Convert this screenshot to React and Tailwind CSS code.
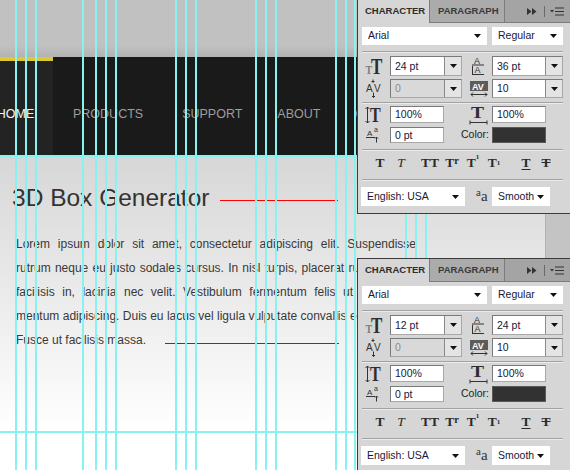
import React from "react";

const SERIF = "Liberation Serif, serif";
const SANS = "Liberation Sans, Arial, sans-serif";

const Tri = () => (
  <svg width="7" height="4" viewBox="0 0 7 4" className="shrink-0">
    <path d="M0 0H7L3.5 4Z" fill="#111" />
  </svg>
);

function Select({ cls, label }) {
  return (
    <div className={`${cls} h-full bg-white flex items-center justify-between pl-[6px] pr-[6px] text-[10.5px] text-[#181838]`}>
      <span>{label}</span>
      <Tri />
    </div>
  );
}

function Field({ cls, value, dd, disabled }) {
  return (
    <div
      className={`${cls} h-full flex border border-t-[#7a7a7a] border-l-[#7a7a7a] border-b-[#a8a8a8] border-r-[#a8a8a8] ${
        disabled ? "bg-[#d9d9d9] text-[#8c8c8c]" : "bg-white text-[#181838]"
      }`}
    >
      <div className="flex-1 flex items-center pl-[4px] text-[10.5px] leading-none">{value}</div>
      {dd && (
        <div className="w-[17px] border-l border-[#8a8a8a] bg-[#e4e4e4] flex items-center justify-center">
          <Tri />
        </div>
      )}
    </div>
  );
}

const Sep = ({ cls }) => (
  <div className={`${cls} ml-[4px] w-[201px] h-[2px] border-t border-t-[#a2a2a2] border-b border-b-[#ececec]`} />
);

const IconSize = () => (
  <svg width="19" height="18" viewBox="0 0 19 18">
    <text transform="translate(0.5 16.5) scale(1 1.3)" fontFamily={SERIF} fontWeight="700" fontSize="10" fill="#7d7d7d">T</text>
    <text transform="translate(6 16.5) scale(1 1.3)" fontFamily={SERIF} fontWeight="700" fontSize="17" fill="#2e2e2e">T</text>
  </svg>
);

const IconLeading = () => (
  <svg width="17" height="20" viewBox="0 0 17 20">
    <text x="4" y="7.5" fontFamily={SANS} fontSize="9" fill="#333">A</text>
    <line x1="2" y1="9" x2="14" y2="9" stroke="#333" />
    <line x1="2.5" y1="10" x2="2.5" y2="18" stroke="#333" />
    <text x="4.5" y="17" fontFamily={SANS} fontSize="9" fill="#333">A</text>
    <line x1="2" y1="18.5" x2="14" y2="18.5" stroke="#333" />
  </svg>
);

const IconKern = () => (
  <svg width="17" height="19" viewBox="0 0 17 19">
    <text x="0" y="13" fontFamily={SANS} fontSize="10" fill="#333">A</text>
    <text x="8" y="13" fontFamily={SANS} fontSize="10" fill="#333">V</text>
    <path d="M7 0.5V4M5.5 2.5H8.5" stroke="#333" fill="none" />
    <path d="M7.5 13.5V18.5M6 17L7.5 18.5L9 17" stroke="#333" fill="none" />
  </svg>
);

const IconTrack = () => (
  <svg width="18" height="18" viewBox="0 0 18 18">
    <rect x="0" y="1" width="18" height="10" fill="#5c5c5c" />
    <text x="2" y="9.5" fontFamily={SANS} fontWeight="700" fontSize="9" fill="#fff">AV</text>
    <path d="M1 14.5H17M3 12.5L1 14.5L3 16.5M15 12.5L17 14.5L15 16.5" stroke="#333" fill="none" />
  </svg>
);

const IconVScale = () => (
  <svg width="18" height="18" viewBox="0 0 18 18">
    <path d="M2.5 1V17M0.5 3L2.5 1L4.5 3M0.5 15L2.5 17L4.5 15" stroke="#333" fill="none" />
    <text transform="translate(5 16) scale(1 1.25)" fontFamily={SERIF} fontWeight="700" fontSize="16" fill="#2e2e2e">T</text>
  </svg>
);

const IconHScale = () => (
  <svg width="19" height="20" viewBox="0 0 19 20">
    <text transform="translate(2 13) scale(1.3 1.05)" fontFamily={SERIF} fontWeight="700" fontSize="15" fill="#2e2e2e">T</text>
    <path d="M1 17.5H18M1 15.5V19.5M18 15.5V19.5" stroke="#333" fill="none" />
  </svg>
);

const IconBaseline = () => (
  <svg width="16" height="16" viewBox="0 0 16 16">
    <text x="1" y="9" fontFamily={SANS} fontSize="8" fill="#333">A</text>
    <line x1="0" y1="10.5" x2="9" y2="10.5" stroke="#333" />
    <text x="8" y="5" fontFamily={SANS} fontSize="7" fill="#333">a</text>
    <path d="M10.5 15.5V10M9 11.5L10.5 10L12 11.5" stroke="#333" fill="none" />
  </svg>
);

function Panel({ top, size, lead }) {
  return (
    <div className={`absolute left-[357px] ${top} w-[220px] bg-[#d6d6d6] border border-[#3c3c3c] font-['Liberation_Sans',Arial,sans-serif]`}>
      <div className="h-[23px] flex">
        <div className="w-[72px] pl-[7px] flex items-center bg-[#d6d6d6] border-r border-[#7c7c7c] text-[9.5px] font-bold text-[#2c2c2c]">
          CHARACTER
        </div>
        <div className="w-[75px] pl-[8px] flex items-center bg-[#ababab] border-r border-b border-[#7c7c7c] text-[9.5px] font-bold text-[#3a3a3a]">
          PARAGRAPH
        </div>
        <div className="flex-1 flex items-center bg-[#a4a4a4] border-b border-[#7c7c7c] pl-[22px]">
          <svg width="10" height="7" viewBox="0 0 10 7">
            <path d="M0 0L4.5 3.5L0 7ZM5 0L9.5 3.5L5 7Z" fill="#333" />
          </svg>
          <div className="ml-[7px] w-px h-[11px] bg-[#6a6a6a]" />
          <svg width="15" height="9" viewBox="0 0 15 9" className="ml-[5px]">
            <path d="M0 3H4L2 5.5Z" fill="#333" />
            <path d="M5 1H14M5 4.5H14M5 8H14" stroke="#333" strokeWidth="1.2" />
          </svg>
        </div>
      </div>

      <div className="mt-[4px] h-[18px] flex pl-[4px] gap-[5px]">
        <Select cls="w-[125px]" label="Arial" />
        <Select cls="w-[71px]" label="Regular" />
      </div>

      <Sep cls="mt-[6px]" />

      <div className="mt-[3px] h-[20px] flex items-center pl-[4px]">
        <div className="w-[28px] h-full flex items-center pl-[3px]"><IconSize /></div>
        <Field cls="w-[72px]" value={size} dd />
        <div className="w-[30px] h-full flex items-center pl-[8px]"><IconLeading /></div>
        <Field cls="w-[71px]" value={lead} dd />
      </div>

      <div className="mt-[3px] h-[19px] flex items-center pl-[4px]">
        <div className="w-[28px] h-full flex items-center pl-[4px]"><IconKern /></div>
        <Field cls="w-[72px]" value="0" dd disabled />
        <div className="w-[30px] h-full flex items-center pl-[8px]"><IconTrack /></div>
        <Field cls="w-[71px]" value="10" dd />
      </div>

      <Sep cls="mt-[4px]" />

      <div className="mt-[2px] h-[17px] flex items-center pl-[4px]">
        <div className="w-[28px] h-full flex items-center pl-[3px]"><IconVScale /></div>
        <Field cls="w-[54px]" value="100%" />
        <div className="w-[18px]" />
        <div className="w-[30px] h-full flex items-center pl-[7px]"><IconHScale /></div>
        <Field cls="w-[54px]" value="100%" />
      </div>

      <div className="mt-[4px] h-[16px] flex items-center pl-[4px]">
        <div className="w-[28px] h-full flex items-center pl-[4px]"><IconBaseline /></div>
        <Field cls="w-[54px]" value="0 pt" />
        <div className="w-[17px]" />
        <div className="w-[31px] text-[10.5px] text-[#222]">Color:</div>
        <div className="w-[54px] h-full bg-[#323232] border border-[#5a5a5a]" />
      </div>

      <Sep cls="mt-[6px]" />

      <div className="mt-[3px] h-[18px] flex items-center font-['Liberation_Serif',serif] text-[13.5px] text-[#2b2b2b] leading-none">
        <div className="ml-[12px] w-[20px] flex justify-center font-bold">T</div>
        <div className="ml-[1px] w-[20px] flex justify-center italic">T</div>
        <div className="ml-[9px] w-[20px] flex justify-center font-bold">TT</div>
        <div className="ml-[2px] w-[20px] flex justify-center font-bold">
          T<span className="text-[10.5px]">r</span>
        </div>
        <div className="ml-[1px] w-[20px] flex justify-center font-bold">
          T<span className="text-[7px] relative top-[-2px]">1</span>
        </div>
        <div className="ml-[1px] w-[20px] flex justify-center font-bold">
          T<span className="text-[7px] relative top-[4px]">1</span>
        </div>
        <div className="ml-[12px] w-[20px] flex justify-center font-bold underline underline-offset-2">T</div>
        <div className="w-[20px] flex justify-center font-bold line-through">T</div>
      </div>

      <Sep cls="mt-[7px]" />

      <div className="mt-[6px] h-[19px] flex items-center pl-[3px]">
        <Select cls="w-[104px]" label="English: USA" />
        <div className="w-[27px] h-full flex items-center pl-[11px] font-['Liberation_Serif',serif] text-[#333] leading-none">
          <span className="text-[11px] relative top-[-4px]">a</span>
          <span className="text-[15px]">a</span>
        </div>
        <Select cls="w-[58px]" label="Smooth" />
      </div>
      <div className="h-[7px]" />
    </div>
  );
}

const vGuides = [
  "left-[15px]", "left-[25px]", "left-[35px]", "left-[82px]", "left-[95px]", "left-[105px]",
  "left-[115px]", "left-[175px]", "left-[185px]", "left-[195px]", "left-[255px]", "left-[265px]",
  "left-[275px]", "left-[335px]", "left-[345px]", "left-[354px]", "left-[405px]", "left-[415px]",
  "left-[425px]",
];

export default function App() {
  return (
    <div className="relative w-[570px] h-[470px] overflow-hidden bg-white font-['Liberation_Sans',Arial,sans-serif]">
      <div className="flex h-full">
        <div className="w-[545px] h-full flex flex-col">
          <div className="h-[57px] bg-linear-to-b from-[#c1c1c1] from-80% to-[#b3b3b3]" />
          <nav className="h-[99px] bg-[#1a1a1a] flex ml-[-22px] text-[12.5px] leading-[14px] text-[#9d9d9d]">
            <div className="w-[75px] h-full bg-[#232323] border-t-4 border-[#dcc832] flex justify-center pt-[46px] text-[#f4f4f4]">
              HOME
            </div>
            <div className="ml-[20px] pt-[50px]">PRODUCTS</div>
            <div className="ml-[39px] pt-[50px]">SUPPORT</div>
            <div className="ml-[35px] pt-[50px]">ABOUT</div>
            <div className="ml-[35px] pt-[50px]">CONTACT</div>
          </nav>
          <main className="flex-1 bg-linear-to-b from-[#d7d7d7] to-white to-88% pt-[28px]">
            <div className="flex items-start pl-[12px]">
              <h1 className="text-[24.5px] leading-[28px] text-[#333] font-normal">3D Box Generator</h1>
              <div className="ml-[11px] mt-[16px] w-[118px] h-px bg-[#ff0000]" />
            </div>
            <div className="mt-[20px] ml-[16px] w-[400px] text-[12px] leading-[24px] text-[#383838]">
              <div className="text-justify [text-align-last:justify]">
                Lorem ipsum dolor sit amet, consectetur adipiscing elit. Suspendisse
              </div>
              <div className="text-justify [text-align-last:justify]">
                rutrum neque eu justo sodales cursus. In nisl turpis, placerat rutrum vitae.
              </div>
              <div className="text-justify [text-align-last:justify]">
                facilisis in, lacinia nec velit. Vestibulum fermentum felis ut consequat
              </div>
              <div className="text-justify [text-align-last:justify]">
                mentum adipiscing. Duis eu lacus vel ligula vulputate convallis eget mauris.
              </div>
              <div className="flex items-start">
                <span>Fusce ut facilisis massa.</span>
                <div className="ml-[19px] mt-[15px] w-[174px] h-px bg-[#e00000]" />
              </div>
            </div>
          </main>
        </div>
        <div className="flex-1 h-full bg-[#c4c4c4] border-l border-[#b2b2b2]" />
      </div>

      {vGuides.map((g) => (
        <div key={g} className={`absolute top-0 h-full w-[2px] bg-[#86f2f2] ${g}`} />
      ))}
      <div className="absolute left-0 top-[155px] w-full h-[2px] bg-[#86f2f2]" />
      <div className="absolute left-0 top-[431px] w-full h-[2px] bg-[#86f2f2]" />

      <Panel top="top-[-1px]" size="24 pt" lead="36 pt" />
      <Panel top="top-[258px]" size="12 pt" lead="24 pt" />
    </div>
  );
}
